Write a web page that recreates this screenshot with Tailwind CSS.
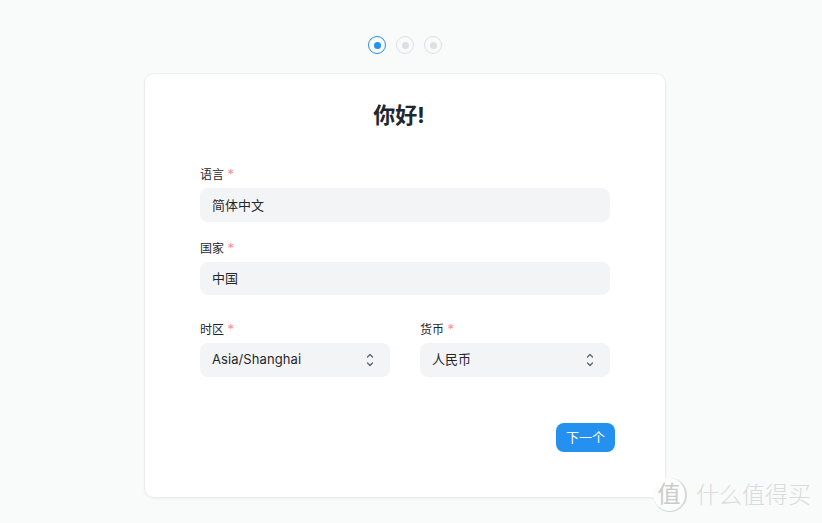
<!DOCTYPE html>
<html lang="zh">
<head>
  <meta charset="UTF-8" />
  <title>你好</title>
  <script src="https://cdn.jsdelivr.net/npm/@tailwindcss/browser@4"></script>
</head>
<body class="relative h-[523px] w-[822px] overflow-hidden bg-[#f9fafa] font-['Inter','Noto_Sans_CJK_SC',sans-serif] text-[#1f272e]">
  <div class="w-[810px]">
    <!-- step dots -->
    <div class="flex justify-center gap-[10px] pt-[36px]">
      <div class="flex h-[18px] w-[18px] items-center justify-center rounded-full border border-[#2490ef]"><div class="h-[7px] w-[7px] rounded-full bg-[#2490ef]"></div></div>
      <div class="flex h-[18px] w-[18px] items-center justify-center rounded-full border border-[#dce0e3]"><div class="h-[7px] w-[7px] rounded-full bg-[#dce0e3]"></div></div>
      <div class="flex h-[18px] w-[18px] items-center justify-center rounded-full border border-[#dce0e3]"><div class="h-[7px] w-[7px] rounded-full bg-[#dce0e3]"></div></div>
    </div>

    <!-- card -->
    <div class="mx-auto mt-[19px] h-[425px] w-[522px] rounded-[10px] border border-[#ebeef0] bg-white pt-[26px] pl-[55px] shadow-[0_1px_2px_rgba(0,0,0,0.05)]">
      <h1 class="w-[398px] text-center text-[22px] leading-[30px] font-bold">你好!</h1>

      <div class="mt-[37px] w-[410px]">
        <label class="block text-[12px] leading-[16px]">语言 <span class="text-[13px] leading-none text-[#ff8a9a]">*</span></label>
        <div class="mt-[5px] flex h-[34px] items-center rounded-[8px] bg-[#f3f4f6] px-[12px] pt-px text-[13px]">简体中文</div>

        <label class="mt-[19px] block text-[12px] leading-[16px]">国家 <span class="text-[13px] leading-none text-[#ff8a9a]">*</span></label>
        <div class="mt-[5px] flex h-[33px] items-center rounded-[8px] bg-[#f3f4f6] px-[12px] text-[13px]">中国</div>

        <div class="mt-[27px] grid grid-cols-2 gap-[30px]">
          <div>
            <label class="block text-[12px] leading-[16px]">时区 <span class="text-[13px] leading-none text-[#ff8a9a]">*</span></label>
            <div class="mt-[5px] flex h-[34px] items-center justify-between rounded-[8px] bg-[#f3f4f6] pr-[15px] pl-[12px] text-[13px] tracking-[0.08px]">
              <span>Asia/Shanghai</span>
              <svg class="h-[14px] w-[10px]" viewBox="0 0 10 14" fill="none" stroke="#5a6672" stroke-width="1.3" stroke-linecap="round" stroke-linejoin="round"><path d="M2.500 4 5 1.500 7.500 4" /><path d="M2.500 10 5 12.500 7.500 10" /></svg>
            </div>
          </div>
          <div>
            <label class="block text-[12px] leading-[16px]">货币 <span class="text-[13px] leading-none text-[#ff8a9a]">*</span></label>
            <div class="mt-[5px] flex h-[34px] items-center justify-between rounded-[8px] bg-[#f3f4f6] pr-[15px] pl-[12px] text-[13px]">
              <span>人民币</span>
              <svg class="h-[14px] w-[10px]" viewBox="0 0 10 14" fill="none" stroke="#5a6672" stroke-width="1.3" stroke-linecap="round" stroke-linejoin="round"><path d="M2.500 4 5 1.500 7.500 4" /><path d="M2.500 10 5 12.500 7.500 10" /></svg>
            </div>
          </div>
        </div>
      </div>

      <div class="mt-[46px] flex w-[415px] justify-end">
        <button class="h-[29px] w-[59px] rounded-[8px] bg-[#2490ef] text-[13px] text-white">下一个</button>
      </div>
    </div>
  </div>

  <!-- watermark -->
  <div class="absolute top-[478px] left-[653px] flex items-center gap-[9px] text-[#d9dbdc]">
    <div class="flex h-[34px] w-[34px] items-center justify-center rounded-full border-r-2 border-b border-[#d4d6d7] bg-[#fdfdfd] text-[23px] leading-none text-[#c9cbcc]">值</div>
    <span class="text-[23px] leading-[34px] font-light">什么值得买</span>
  </div>
</body>
</html>
